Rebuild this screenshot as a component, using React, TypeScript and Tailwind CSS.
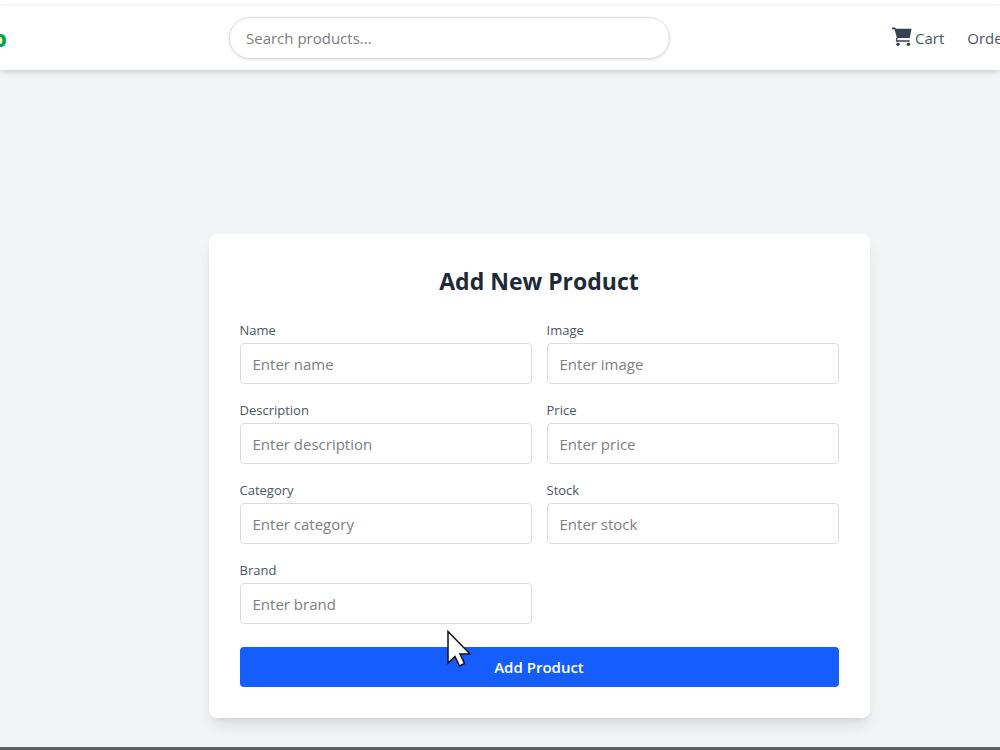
import React from "react";

type Field = {
  id: string;
  label: string;
};

const fields: Field[] = [
  { id: "name", label: "Name" },
  { id: "image", label: "Image" },
  { id: "description", label: "Description" },
  { id: "price", label: "Price" },
  { id: "category", label: "Category" },
  { id: "stock", label: "Stock" },
  { id: "brand", label: "Brand" },
];

function CartIcon() {
  return (
    <svg aria-hidden="true" viewBox="0 0 20 20" className="mb-0.5 size-5 shrink-0">
      <path d="M0 .5h3.200l.7 1.200H19.500L17.800 11H5L2.500 2.300H0z" fill="#364153" />
      <path d="M5 10.500 4.600 14H17.600" fill="none" stroke="#364153" strokeWidth="1.400" />
      <circle cx="6" cy="17.300" r="1.700" fill="#364153" />
      <circle cx="16.500" cy="17.300" r="1.700" fill="#364153" />
    </svg>
  );
}

function Header() {
  return (
    <header className="relative flex items-center justify-between h-16 bg-white shadow-md">
      <a
        href="#"
        className="flex justify-end w-[7px] shrink-0 overflow-hidden text-2xl font-bold text-green-600"
      >
        p
      </a>
      <input
        type="text"
        aria-label="Search products"
        placeholder="Search products..."
        className="w-full max-w-[441px] h-[42px] px-4 text-[15px] border border-[#d9dce1] rounded-full shadow-sm placeholder:text-[#7c7c7c] focus:outline-none"
      />
      <nav className="flex items-center gap-[23px] w-[108px] shrink-0 overflow-hidden whitespace-nowrap text-[15px] text-gray-600">
        <a href="#" className="flex items-center gap-[3px]">
          <CartIcon />
          Cart
        </a>
        <a href="#">Orders</a>
      </nav>
    </header>
  );
}

function ProductForm() {
  return (
    <form
      onSubmit={(e) => e.preventDefault()}
      className="relative w-full max-w-[661px] p-[31px] bg-white rounded-lg shadow-lg"
    >
      <h2 className="mb-[23px] text-[23px] leading-8 font-bold text-center text-gray-800">
        Add New Product
      </h2>
      <div className="grid grid-cols-2 gap-x-[15px] gap-y-4">
        {fields.map((field) => (
          <div key={field.id}>
            <label
              htmlFor={field.id}
              className="block mb-[3px] text-[13px] leading-5 text-gray-600"
            >
              {field.label}
            </label>
            <input
              id={field.id}
              type="text"
              placeholder={`Enter ${field.label.toLowerCase()}`}
              className="block w-full h-[41px] px-3 text-[15px] border border-[#d9dce1] rounded placeholder:text-[#808080] focus:outline-none"
            />
          </div>
        ))}
      </div>
      <button
        type="submit"
        className="block w-full h-10 mt-[23px] text-[15px] font-semibold text-white bg-[#155dfc] rounded"
      >
        Add Product
      </button>
      <svg
        aria-hidden="true"
        viewBox="0 0 24 37"
        className="absolute left-[238px] top-[396px] w-6 h-[37px]"
      >
        <path
          d="M1 1.500V33l7-6.500 4.500 9.500 5-2.500-4.500-9.500H23z"
          fill="white"
          stroke="#111"
          strokeWidth="1.500"
        />
      </svg>
    </form>
  );
}

export default function App() {
  return (
    <div className="flex flex-col min-h-screen overflow-hidden bg-gray-100 font-['Open_Sans','Noto_Sans',sans-serif]">
      <div className="h-1.5 bg-white border-b-2 border-gray-100" />
      <Header />
      <main className="flex flex-1 items-end justify-center pt-40 pb-[29px] pl-[78px]">
        <ProductForm />
      </main>
      <div className="h-[3px] bg-[#5f6062]" />
    </div>
  );
}
